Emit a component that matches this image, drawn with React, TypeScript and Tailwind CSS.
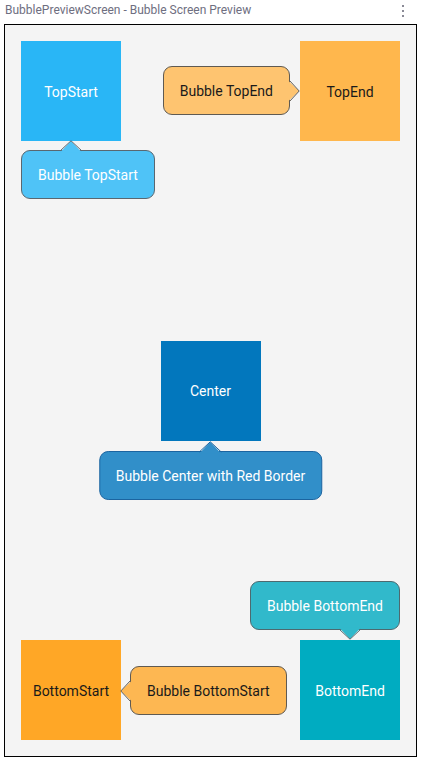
import type { ReactNode } from 'react';

type Side = 'top' | 'bottom' | 'left' | 'right';

// small tail drawn over the bubble edge so the border under it is hidden
const Tail = ({ side, fill, stroke, className }: { side: Side; fill: string; stroke: string; className: string }) => {
  const vertical = side === 'top' || side === 'bottom';
  const w = vertical ? 22 : 12;
  const h = vertical ? 12 : 22;
  let shape = '';
  let edges = '';
  if (side === 'top') {
    shape = 'M0 12.5 L11 1 L22 12.5 Z';
    edges = 'M0 11 L11 0.8 L22 11';
  } else if (side === 'bottom') {
    shape = 'M0 -0.5 L11 11 L22 -0.5 Z';
    edges = 'M0 1 L11 11.2 L22 1';
  } else if (side === 'right') {
    shape = 'M-0.5 0 L11 11 L-0.5 22 Z';
    edges = 'M1 0 L11.2 11 L1 22';
  } else {
    shape = 'M12.5 0 L1 11 L12.5 22 Z';
    edges = 'M11 0 L0.8 11 L11 22';
  }
  return (
    <svg width={w} height={h} viewBox={`0 0 ${w} ${h}`} className={`absolute overflow-visible ${className}`}>
      <path d={shape} fill={fill} />
      <path d={edges} fill="none" stroke={stroke} strokeWidth="1" />
    </svg>
  );
};

const Bubble = ({
  children,
  side,
  fill,
  stroke,
  tailClass,
  className,
}: {
  children: ReactNode;
  side: Side;
  fill: string;
  stroke: string;
  tailClass: string;
  className: string;
}) => (
  <div
    className={`absolute flex h-[49px] items-center whitespace-nowrap rounded-[9px] border px-4 pt-[2px] text-[14px] ${className}`}
    style={{ background: fill, borderColor: stroke }}
  >
    <Tail side={side} fill={fill} stroke={stroke} className={tailClass} />
    {children}
  </div>
);

const Box = ({ label, className, children }: { label: string; className: string; children?: ReactNode }) => (
  <div className={`relative flex h-[100px] w-[100px] shrink-0 items-center justify-center pt-[2px] text-[14px] ${className}`}>
    {label}
    {children}
  </div>
);

export default function App() {
  return (
    <div className="h-[761px] w-[423px] bg-white" style={{ fontFamily: 'Roboto, "Noto Sans", sans-serif' }}>
      {/* title bar */}
      <div className="flex h-6 items-start justify-between pl-[5px] pr-[19px] pt-[2px]">
        <span className="text-[12px] leading-[17px] text-[#6e6e80]">
          BubblePreviewScreen - Bubble Screen Preview
        </span>
        <div className="flex flex-col gap-[3px] pt-[3px]">
          <span className="h-[2px] w-[2px] bg-[#8a8a96]" />
          <span className="h-[2px] w-[2px] bg-[#8a8a96]" />
          <span className="h-[2px] w-[2px] bg-[#8a8a96]" />
        </div>
      </div>

      {/* preview frame */}
      <div className="ml-1 flex h-[733px] w-[413px] flex-col justify-between border border-black bg-[#f4f4f4] p-4">
        <div className="flex items-start justify-between">
          <Box label="TopStart" className="bg-[#29b6f6] text-white">
            <Bubble
              side="top"
              fill="#4fc3f7"
              stroke="#5a6770"
              tailClass="left-[38px] top-[-11px]"
              className="left-0 top-[109px] text-white"
            >
              Bubble TopStart
            </Bubble>
          </Box>
          <Box label="TopEnd" className="bg-[#ffb74d] text-[#1a1a1a]">
            <Bubble
              side="right"
              fill="#fec470"
              stroke="#5f5a52"
              tailClass="right-[-11px] top-[13px]"
              className="right-[110px] top-[25px] text-[#1a1a1a]"
            >
              Bubble TopEnd
            </Bubble>
          </Box>
        </div>

        <div className="flex justify-center">
          <Box label="Center" className="bg-[#0277bd] text-white">
            <Bubble
              side="top"
              fill="#318fc9"
              stroke="#1b64a0"
              tailClass="left-1/2 -translate-x-1/2 top-[-11px]"
              className="left-1/2 top-[110px] -translate-x-1/2 text-white"
            >
              Bubble Center with Red Border
            </Bubble>
          </Box>
        </div>

        <div className="flex items-end justify-between">
          <Box label="BottomStart" className="bg-[#ffa726] text-[#1a1a1a]">
            <Bubble
              side="left"
              fill="#fdb752"
              stroke="#5f5a52"
              tailClass="left-[-11px] top-[13px]"
              className="left-[109px] top-[26px] text-[#1a1a1a]"
            >
              Bubble BottomStart
            </Bubble>
          </Box>
          <Box label="BottomEnd" className="bg-[#00acc1] text-white">
            <Bubble
              side="bottom"
              fill="#31b9cb"
              stroke="#4d6a70"
              tailClass="right-[38px] bottom-[-11px]"
              className="bottom-[110px] right-0 text-white"
            >
              Bubble BottomEnd
            </Bubble>
          </Box>
        </div>
      </div>
    </div>
  );
}
